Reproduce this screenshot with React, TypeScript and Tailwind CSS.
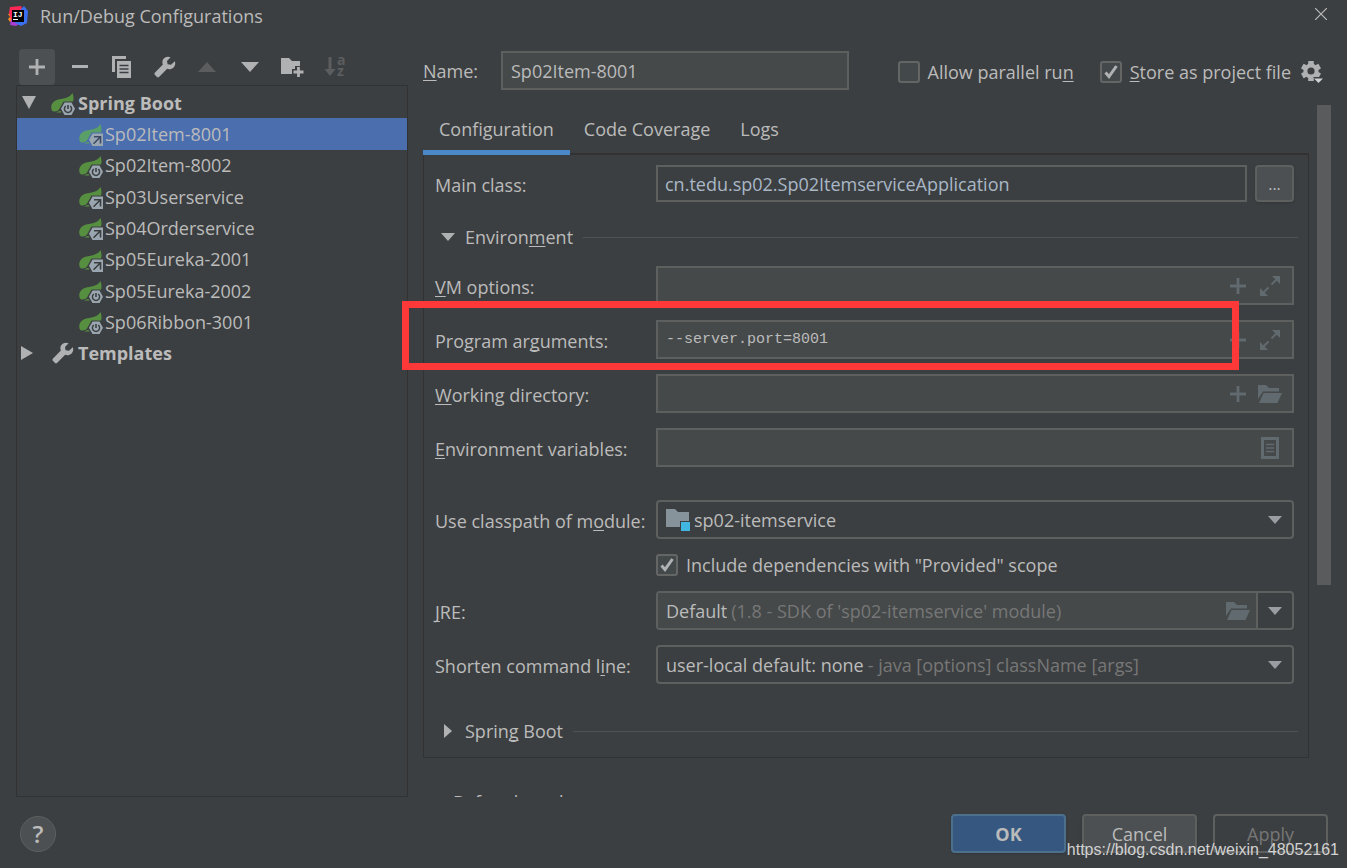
import type { ReactNode } from "react";

type BadgeKind = "power" | "shared";

const CONFIGS: { name: string; badge: BadgeKind }[] = [
  { name: "Sp02Item-8001", badge: "shared" },
  { name: "Sp02Item-8002", badge: "power" },
  { name: "Sp03Userservice", badge: "shared" },
  { name: "Sp04Orderservice", badge: "shared" },
  { name: "Sp05Eureka-2001", badge: "shared" },
  { name: "Sp05Eureka-2002", badge: "power" },
  { name: "Sp06Ribbon-3001", badge: "power" },
];

const FIELD = "flex h-[39px] min-w-0 items-center border-2 border-[#5e6060]";

function Logo() {
  return (
    <svg width="20" height="20" viewBox="0 0 20 20" aria-hidden="true">
      <path d="M0 8 3 7 7 14 2 16 0 13 2 11Z" fill="#fc8a1d" />
      <path d="M2 1 13 0 15 5 8 17 4 16 1 7Z" fill="#fe2857" />
      <path d="M3 14 9 9 14 16 8 20 2 19Z" fill="#a83fd0" />
      <path d="M13 3 16 0 20 5 19 17 13 20 7 17Z" fill="#3a70f0" />
      <rect x="4" y="4" width="12" height="12" fill="#000" />
      <text x="5" y="11" fontSize="8" fontWeight="700" fontFamily="Liberation Mono, monospace" fill="#fff">
        IJ
      </text>
      <rect x="5" y="13" width="5" height="1" fill="#fff" />
    </svg>
  );
}

function SpringIcon({ badge, light }: { badge: BadgeKind; light?: boolean }) {
  const leaf = light ? "#5a9e68" : "#568f40";
  const hole = light ? "#3c4a66" : "#3c3f41";

  return (
    <svg width="24" height="23" viewBox="0 0 24 23" className="mt-1 shrink-0" aria-hidden="true">
      <path
        d="M21.500 0C22.500 3 23 6 22 8.500H12.500L8 16.500C6.500 18.500 2 19.500 .7 17C-.8 12.500 1.500 8.200 6.500 6.700C11 5.400 18.500 5.500 21.500 0Z"
        fill={leaf}
      />
      <path d="M5 19.500Q8 17.500 9.500 18L10.500 19.500Z" fill={leaf} />
      {badge === "power" ? (
        <>
          <path d="M13.500 9.500H20.500L24 15.800 20.500 22H13.500L10 15.800Z" fill="#9aa7b0" />
          <path d="M14.800 13A3.600 3.600 0 1 0 19.200 13" fill="none" stroke={hole} strokeWidth="1.500" />
          <path d="M17 12V16" stroke={hole} strokeWidth="1.600" />
        </>
      ) : (
        <>
          <path d="M13.500 9.500H24V22H13.500L10 15.800Z" fill="#9aa7b0" />
          <path d="M15 12.800H21.500V19.500M21 13.300 14.500 19.800" fill="none" stroke={hole} strokeWidth="1.600" />
        </>
      )}
    </svg>
  );
}

function WrenchIcon() {
  return (
    <svg width="22" height="22" viewBox="0 0 22 22" aria-hidden="true">
      <path
        d="M20.8 5.2 17 8.8 13.6 8.2 13 5 16.6 1.2C13.6-.1 10.4 1 9 3.6 8.2 5.3 8.2 7 8.9 8.6L.8 16.8C.3 17.4.3 18.2.8 18.8L3 21C3.6 21.5 4.4 21.5 5 21L13.2 12.8C15.2 13.6 17.8 13.2 19.6 11.4 21.3 9.7 21.6 7.2 20.8 5.2Z"
        fill="#afb1b3"
      />
    </svg>
  );
}

function Triangle({ dir, color = "#afb1b3" }: { dir: "up" | "down"; color?: string }) {
  return (
    <svg width="18" height="10" viewBox="0 0 18 10" aria-hidden="true">
      <path d={dir === "up" ? "M0 10H18L9 0Z" : "M0 0H18L9 10Z"} fill={color} />
    </svg>
  );
}

function ComboArrow() {
  return (
    <svg width="14" height="8" viewBox="0 0 14 8" className="shrink-0" aria-hidden="true">
      <path d="M0 0H14L7 8Z" fill="#9a9da1" />
    </svg>
  );
}

function PlusIcon({ color = "#616a6e" }: { color?: string }) {
  return (
    <svg width="16" height="16" viewBox="0 0 16 16" aria-hidden="true">
      <path d="M8 0V16M0 8H16" stroke={color} strokeWidth="2.8" />
    </svg>
  );
}

function ExpandIcon() {
  return (
    <svg width="20" height="20" viewBox="0 0 20 20" aria-hidden="true">
      <path d="M12 0H20V8ZM0 12V20H8Z" fill="#616a6e" />
      <path d="M17 3 11.5 8.5M3 17 8.5 11.5" stroke="#616a6e" strokeWidth="2" />
    </svg>
  );
}

function FolderIcon() {
  return (
    <svg width="24" height="18" viewBox="0 0 24 18" aria-hidden="true">
      <path d="M0 14V0H8L11 3H21V6.5H5Z" fill="#616a6e" />
      <path d="M5.5 8H24L19.5 18H1Z" fill="#616a6e" />
    </svg>
  );
}

function ListIcon() {
  return (
    <svg width="18" height="22" viewBox="0 0 18 22" aria-hidden="true">
      <rect x="1.5" y="1.5" width="15" height="19" fill="none" stroke="#616a6e" strokeWidth="3" />
      <path d="M5 7.5H13M5 11H13M5 14.5H13" stroke="#616a6e" strokeWidth="1.4" />
    </svg>
  );
}

function GearIcon() {
  return (
    <svg width="22" height="24" viewBox="0 0 22 24" aria-hidden="true">
      <g transform="translate(10 11)" fill="#afb1b3">
        {[0, 60, 120].map((a) => (
          <rect key={a} x="-2.8" y="-10" width="5.6" height="20" rx="0.6" transform={`rotate(${a})`} />
        ))}
        <circle r="7.6" />
        <circle r="3.6" fill="#3c3f41" />
      </g>
      <path d="M12 17H22V18L18 23Z" fill="#3c3f41" />
      <path d="M13 18.5H22L17.5 23Z" fill="#d0d2d4" />
    </svg>
  );
}

function ToolButton({ label, active, children }: { label: string; active?: boolean; children: ReactNode }) {
  return (
    <button
      type="button"
      aria-label={label}
      className={`flex size-9 items-center justify-center rounded ${active ? "bg-[#4c5052]" : ""}`}
    >
      {children}
    </button>
  );
}

function Checkbox({ id, checked, children }: { id: string; checked?: boolean; children: ReactNode }) {
  return (
    <div className="flex h-[22px] items-center gap-2">
      <span className="relative flex size-[22px]">
        <input
          id={id}
          type="checkbox"
          defaultChecked={checked}
          className="peer size-[22px] appearance-none rounded-[3px] border-2 border-[#646666] bg-[#43494a]"
        />
        <svg
          viewBox="0 0 22 22"
          className="pointer-events-none absolute inset-0 hidden peer-checked:block"
          aria-hidden="true"
        >
          <path d="M5.5 11.5 9 15.5 16.5 5" fill="none" stroke="#afb1b3" strokeWidth="3" />
        </svg>
      </span>
      <label htmlFor={id} className="whitespace-nowrap">
        {children}
      </label>
    </div>
  );
}

function Row({ id, label, children }: { id: string; label: ReactNode; children: ReactNode }) {
  return (
    <div className="relative flex items-center">
      <label htmlFor={id} className="w-[221px] shrink-0 pt-0.5 whitespace-nowrap">
        {label}
      </label>
      {children}
    </div>
  );
}

function TextField({ id, value = "", children }: { id: string; value?: string; children: ReactNode }) {
  return (
    <div className={`${FIELD} flex-1 bg-[#45494a] pr-1.5`}>
      <input
        id={id}
        defaultValue={value}
        className="min-w-0 flex-1 bg-transparent pl-2 font-['Liberation_Mono',monospace] text-[15px] outline-none"
      />
      {children}
    </div>
  );
}

function IconButton({ label, children }: { label: string; children: ReactNode }) {
  return (
    <button type="button" aria-label={label} className="flex w-8 items-center justify-center">
      {children}
    </button>
  );
}

function Sidebar() {
  return (
    <aside className="flex w-[392px] shrink-0 flex-col">
      <div className="ml-[3px] flex w-[334px] justify-between">
        <ToolButton label="Add" active>
          <PlusIcon color="#afb1b3" />
        </ToolButton>
        <ToolButton label="Remove">
          <svg width="16" height="4" aria-hidden="true">
            <rect width="16" height="3" fill="#afb1b3" />
          </svg>
        </ToolButton>
        <ToolButton label="Copy">
          <svg width="20" height="22" viewBox="0 0 20 22" aria-hidden="true">
            <path d="M0 0H14V3H3V16H0Z" fill="#afb1b3" />
            <path d="M5 5H19V22H5Z" fill="#afb1b3" />
            <path d="M7.5 9.5H16.5M7.5 13H16.5M7.5 16.5H16.5" stroke="#3c3f41" strokeWidth="1.5" />
          </svg>
        </ToolButton>
        <ToolButton label="Edit templates">
          <WrenchIcon />
        </ToolButton>
        <ToolButton label="Move up">
          <Triangle dir="up" color="#5b5d5e" />
        </ToolButton>
        <ToolButton label="Move down">
          <Triangle dir="down" />
        </ToolButton>
        <ToolButton label="New folder">
          <svg width="23" height="20" viewBox="0 0 23 20" aria-hidden="true">
            <path d="M0 1H8L11 4H19V9H14V12H11V17H0Z" fill="#afb1b3" />
            <path d="M17.5 10V20M12.5 15H22.5" stroke="#afb1b3" strokeWidth="2.8" />
          </svg>
        </ToolButton>
        <ToolButton label="Sort">
          <svg width="22" height="22" viewBox="0 0 22 22" className="overflow-visible" aria-hidden="true">
            <path d="M4.5 1H7.5V13H11.5L6 20 .5 13H4.5Z" fill="#5b5d5e" />
            <text x="13" y="9" fontSize="14" fontWeight="700" fill="#5b5d5e">
              a
            </text>
            <text x="13" y="20" fontSize="14" fontWeight="700" fill="#5b5d5e">
              z
            </text>
          </svg>
        </ToolButton>
      </div>
      <div className="flex-1 border border-[#323232] pt-px">
        <ul className="grid h-[282px] grid-rows-9">
          <li className="flex items-center pl-1 font-bold">
            <svg width="16" height="14" viewBox="0 0 16 14" className="mr-3.5" aria-hidden="true">
              <path d="M1 0H15L8 13Z" fill="#afb1b3" />
            </svg>
            <SpringIcon badge="power" />
            <span className="pl-[3px]">Spring Boot</span>
          </li>
          {CONFIGS.map((c, i) => (
            <li key={c.name} className={`flex items-center pl-[62px] ${i === 0 ? "bg-[#4b6eaf]" : ""}`}>
              <SpringIcon badge={c.badge} light={i === 0} />
              <span className="pl-0.5">{c.name}</span>
            </li>
          ))}
          <li className="flex items-center pl-1 font-bold">
            <svg width="12" height="16" viewBox="0 0 12 16" className="mr-[19px]" aria-hidden="true">
              <path d="M0 1V15L12 8Z" fill="#afb1b3" />
            </svg>
            <WrenchIcon />
            <span className="pl-1">Templates</span>
          </li>
        </ul>
      </div>
    </aside>
  );
}

function Section({ open, className, children }: { open?: boolean; className?: string; children: ReactNode }) {
  return (
    <div className={`flex items-center gap-2.5 ${className ?? ""}`}>
      <button type="button" className="flex items-center gap-2.5 pl-1.5">
        <svg width="14" height="14" viewBox="0 0 14 14" aria-hidden="true">
          <path d={open ? "M0 3H14L7 11Z" : "M3 0V14L11 7Z"} fill="#afb1b3" />
        </svg>
        <span>{children}</span>
      </button>
      <hr className="-mr-1 flex-1 border-[#515353]" />
    </div>
  );
}

function ConfigForm() {
  return (
    <div className="border border-t-2 border-[#323232] pt-2.5 pr-3.5 pb-3.5 pl-[11px]">
      <Row id="main-class" label="Main class:">
        <input
          id="main-class"
          defaultValue="cn.tedu.sp02.Sp02ItemserviceApplication"
          className="h-[37px] min-w-0 flex-1 border-2 border-[#5e6060] bg-transparent px-[7px] text-[#a9b7c6] outline-none"
        />
        <button
          type="button"
          className="ml-2 h-[37px] w-[39px] rounded border-2 border-[#5e6060] bg-[#4c5052] text-base shadow-sm"
        >
          ...
        </button>
      </Row>

      <Section open className="h-16 pt-1.5">
        Environ<u>m</u>ent
      </Section>

      <div className="flex flex-col gap-[15px]">
        <Row id="vm-options" label={<><u>V</u>M options:</>}>
          <TextField id="vm-options">
            <IconButton label="Insert macro"><PlusIcon /></IconButton>
            <IconButton label="Expand"><ExpandIcon /></IconButton>
          </TextField>
        </Row>
        <Row id="program-arguments" label={<>Program ar<u>g</u>uments:</>}>
          <TextField id="program-arguments" value="--server.port=8001">
            <IconButton label="Insert macro"><PlusIcon /></IconButton>
            <IconButton label="Expand"><ExpandIcon /></IconButton>
          </TextField>
          {/* highlight drawn over the row */}
          <div className="pointer-events-none absolute -top-[19px] right-[55px] -bottom-[11px] -left-[33px] border-[7px] border-[#fc3838]" />
        </Row>
        <Row id="working-directory" label={<><u>W</u>orking directory:</>}>
          <TextField id="working-directory">
            <IconButton label="Insert macro"><PlusIcon /></IconButton>
            <IconButton label="Browse"><FolderIcon /></IconButton>
          </TextField>
        </Row>
        <Row id="environment-variables" label={<><u>E</u>nvironment variables:</>}>
          <TextField id="environment-variables">
            <IconButton label="Edit variables"><ListIcon /></IconButton>
          </TextField>
        </Row>
      </div>

      <div className="mt-[33px] flex flex-col gap-[15px]">
        <Row id="module" label={<>Use classpath of m<u>o</u>dule:</>}>
          <div className={`${FIELD} flex-1 gap-1 rounded pr-2.5 pl-2`}>
            <svg width="24" height="22" viewBox="0 0 24 22" className="shrink-0" aria-hidden="true">
              <path d="M0 0H9L12 3H23V12H14V18H0Z" fill="#87939a" />
              <rect x="15" y="13" width="9" height="9" fill="#40b6e0" />
            </svg>
            <select id="module" className="min-w-0 flex-1 appearance-none bg-transparent outline-none">
              <option>sp02-itemservice</option>
            </select>
            <ComboArrow />
          </div>
        </Row>
        <div className="pl-[221px]">
          <Checkbox id="include-provided" checked>
            Include dependencies with "Provided" scope
          </Checkbox>
        </div>
        <Row id="jre" label={<><u>J</u>RE:</>}>
          <div className={`${FIELD} flex-1 rounded`}>
            <div className="flex h-full min-w-0 flex-1 items-center bg-[#45494a] pl-2">
              <input id="jre" defaultValue="Default" className="field-sizing-content bg-transparent outline-none" />
              <span className="flex-1 truncate pl-1 text-[#777777]">(1.8 - SDK of 'sp02-itemservice' module)</span>
              <button type="button" aria-label="Browse JRE" className="px-1.5">
                <FolderIcon />
              </button>
            </div>
            <button
              type="button"
              aria-label="Show JRE list"
              className="flex h-full w-9 items-center justify-center border-l-2 border-[#5e6060]"
            >
              <ComboArrow />
            </button>
          </div>
        </Row>
        <Row id="shorten" label={<>Shorten command l<u>i</u>ne:</>}>
          <div className={`${FIELD} flex-1 rounded pr-2.5 pl-2`}>
            <select id="shorten" className="field-sizing-content appearance-none bg-transparent outline-none">
              <option>user-local default: none</option>
            </select>
            <span className="flex-1 truncate pl-1 text-[#777777]">- java [options] className [args]</span>
            <ComboArrow />
          </div>
        </Row>
      </div>

      <Section className="mt-[35px]">
        Sprin<u>g</u> Boot
      </Section>
    </div>
  );
}

export default function App() {
  return (
    <div className="relative flex h-screen flex-col overflow-hidden bg-[#3c3f41] font-['Open_Sans','Noto_Sans',sans-serif] text-[18px] leading-6 text-[#bbbbbb] [&_u]:underline-offset-2 [&_u]:[text-decoration-skip-ink:none]">
      <header className="flex h-8 shrink-0 items-center pr-5 pl-2">
        <Logo />
        <h1 className="ml-3">Run/Debug Configurations</h1>
        <button type="button" aria-label="Close" className="mb-1 ml-auto">
          <svg width="12" height="12" viewBox="0 0 12 12" aria-hidden="true">
            <path d="M0 0 12 12M12 0 0 12" stroke="#bbbbbb" strokeWidth="1.2" />
          </svg>
        </button>
      </header>

      <main className="flex min-h-0 flex-1 gap-[15px] overflow-hidden px-4 pt-[17px]">
        <Sidebar />
        <section className="min-w-0 flex-1">
          <div className="mt-0.5 flex h-[39px] items-center pr-2">
            <label htmlFor="name" className="w-[78px] shrink-0">
              <u>N</u>ame:
            </label>
            <input
              id="name"
              defaultValue="Sp02Item-8001"
              className="h-[39px] w-[348px] min-w-0 border-2 border-[#5e6060] bg-[#45494a] px-2 outline-none"
            />
            <div className="mt-0.5 ml-auto flex items-center gap-2.5">
              <div className="mr-4">
                <Checkbox id="parallel">
                  Allow parallel ru<u>n</u>
                </Checkbox>
              </div>
              <Checkbox id="store" checked>
                <u>S</u>tore as project file
              </Checkbox>
              <button type="button" aria-label="Storage options">
                <GearIcon />
              </button>
            </div>
          </div>

          <div className="mt-[15px] flex gap-2">
            <div className="min-w-0 flex-1">
              <div role="tablist" className="-mb-0.5 flex h-[50px]">
                <button
                  type="button"
                  role="tab"
                  aria-selected="true"
                  className="relative z-10 border-b-[5px] border-[#4a88c7] px-4 pt-0.5"
                >
                  Configuration
                </button>
                <button type="button" role="tab" className="border-b-[5px] border-transparent px-3.5 pt-0.5">
                  Code Coverage
                </button>
                <button type="button" role="tab" className="border-b-[5px] border-transparent px-4 pt-0.5">
                  Logs
                </button>
              </div>
              <ConfigForm />
              <Section open className="mt-8">
                Before launch
              </Section>
            </div>
            <div className="h-[480px] w-3.5 shrink-0 bg-[#595b5d]" />
          </div>
        </section>
      </main>

      <footer className="flex h-[71px] shrink-0 items-start justify-between pt-[17px] pr-[19px] pl-5">
        <button
          type="button"
          aria-label="Help"
          className="mt-0.5 size-9 rounded-full border border-[#5e6060] bg-[#4c5052] text-2xl leading-8 font-semibold"
        >
          ?
        </button>
        <div className="flex gap-4">
          <button
            type="button"
            className="h-[39px] w-[115px] rounded border-2 border-[#4c708c] bg-[#365880] font-bold shadow-sm"
          >
            OK
          </button>
          <button type="button" className="h-[39px] w-[115px] rounded border-2 border-[#5e6060] bg-[#4c5052] shadow-sm">
            Cancel
          </button>
          <button type="button" className="h-[39px] w-[115px] rounded border-2 border-[#5e6060] text-[#777777]">
            Apply
          </button>
        </div>
      </footer>

      <p className="pointer-events-none absolute right-2 bottom-1.5 font-['Liberation_Sans',sans-serif] text-base text-[#d2d2d2]">
        https://blog.csdn.net/weixin_48052161
      </p>
    </div>
  );
}
